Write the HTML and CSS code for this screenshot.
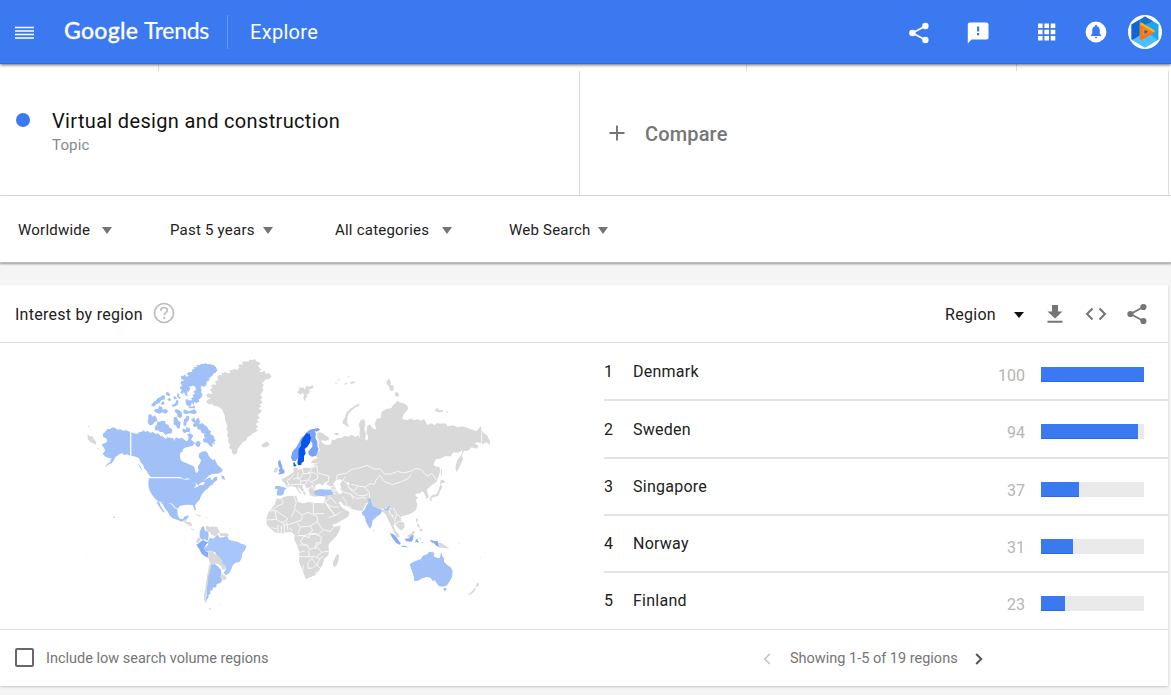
FILE: index.html
```html
<!DOCTYPE html>
<html lang="en">
<head>
<meta charset="utf-8">
<title>Google Trends</title>
<link rel="stylesheet" href="styles.css">
</head>
<body>
<header class="topbar">
  <svg class="menu" viewBox="0 0 19 14"><path d="M0 1.500h19M0 5h19M0 8.500h19M0 12h19"/></svg>
  <div class="logo"><span class="brand">Google</span><span class="product">Trends</span></div>
  <div class="page-name">Explore</div>
  <nav class="actions">
    <svg class="share" viewBox="0 0 20 22"><path d="M16.5 4 3.500 11l13 7" fill="none" stroke="currentColor" stroke-width="1.800"/><circle cx="16.400" cy="4" r="3.200"/><circle cx="3.400" cy="11" r="3.200"/><circle cx="16.400" cy="18" r="3.200"/></svg>
    <svg class="feedback" viewBox="0 0 22 22"><path fill-rule="evenodd" d="M2.500.5h17a2 2 0 0 1 2 2v13a2 2 0 0 1-2 2h-15L.8 21.500v-19a2 2 0 0 1 1.700-2zM10 4.500v5h2.200v-5zm0 6.500v2.300h2.200V11z"/></svg>
    <svg class="apps" viewBox="0 0 18 18"><path d="M0 .5h4.600v4.600H0zm6.400 0H11v4.600H6.400zm6.300 0h4.600v4.600h-4.600zM0 6.700h4.600v4.600H0zm6.400 0H11v4.600H6.400zm6.300 0h4.600v4.600h-4.600zM0 12.900h4.600v4.600H0zm6.400 0H11v4.600H6.400zm6.300 0h4.600v4.600h-4.600z"/></svg>
    <svg class="bell" viewBox="0 0 22 22"><circle cx="11" cy="11" r="10.400"/><path fill="#3b79f1" d="M5.800 15v-.8l1.400-1.400V9.200c0-2 1.200-3.500 2.900-3.900V4.700a.9.9 0 0 1 1.800 0v.6c1.700.4 2.900 1.900 2.900 3.900v3.600l1.400 1.400v.8zM9.700 15.800h2.600a1.300 1.300 0 0 1-2.600 0z"/></svg>
    <svg class="avatar" viewBox="0 0 34 34"><circle cx="17" cy="17" r="17" fill="#fff"/><path fill="#1aa5fb" d="m17 1.500 13.500 8v15L17 32.500l-13.500-8v-15z"/><path fill="#1264d3" d="m3.500 9.500 8-4.700v17.700l-8 2z"/><path fill="#1874c9" d="m17 1.500 8 4.800-8 3.700-6-4.800z"/><path fill="#50bfff" d="m4.500 25 7-4.500 12-.5 6 5L17 32.500z"/><path d="m13.300 9.500 12.200 7-12.200 7z" fill="#fa8a12" stroke="#f8751a" stroke-width="3" stroke-linejoin="round"/><path d="m13.500 9 12 7" stroke="#f9b21c" stroke-width="2.600" stroke-linecap="round"/><path fill="#185fbd" d="m16.500 14.700 3.600 2.100-3.600 2.300z"/></svg>
  </nav>
</header>
<div class="tick-strip"><i></i><i></i><i></i></div>
<section class="terms">
  <div class="term">
    <span class="dot"></span>
    <div><div class="term-name">Virtual design and construction</div><div class="term-type">Topic</div></div>
  </div>
  <div class="compare">
    <svg viewBox="0 0 16 16"><path d="M8 .5v15M.5 8h15" stroke="currentColor" stroke-width="1.900"/></svg>
    <span>Compare</span>
  </div>
</section>
<section class="filters">
  <div class="filter world">Worldwide<b></b></div>
  <div class="filter time">Past 5 years<b></b></div>
  <div class="filter category">All categories<b></b></div>
  <div class="filter kind">Web Search<b></b></div>
</section>
<main class="card">
  <div class="card-head">
    <h1>Interest by region</h1>
    <svg class="help" viewBox="0 0 22 22"><circle cx="11" cy="11" r="9.500"/><path d="M7.800 8.800C7.800 6.700 9.200 5.500 11 5.500s3.200 1.200 3.200 2.900c0 2.300-3.100 2.500-3.100 4.900M11.100 14.900v2"/></svg>
    <div class="resolution">Region</div>
    <b class="caret"></b>
    <svg class="download" viewBox="0 0 16 19"><path d="M5 0h6v6.500h4.500L8 13.500.5 6.500H5zM.5 15.700h15v2H.5z"/></svg>
    <svg class="embed" viewBox="0 0 22 14"><path d="M7.500 1.500 2 7l5.500 5.500M14.500 1.500 20 7l-5.500 5.500"/></svg>
    <svg class="share-small" viewBox="0 0 20 22"><path d="M16.500 4 3.500 11l13 7" fill="none" stroke="currentColor" stroke-width="1.800"/><circle cx="16.400" cy="4" r="3.100"/><circle cx="3.400" cy="11" r="3.100"/><circle cx="16.400" cy="18" r="3.100"/></svg>
  </div>
  <div class="card-body">
    <div class="map-panel">
      <svg class="map" viewBox="0 0 1260 810">
        <g class="searched">
          <path d="M68 253L76 245 81 238 90 237 98 232 106 234 112 239 121 238 130 242 138 241 150 245V317L141 313 133 315 126 310 118 313 112 317 106 321 102 331 95 340 84 344 75 352 80 343 90 337 94 325 86 323 78 322 68 312 75 302 72 293 67 288 66 282 75 280 82 274 79 265 70 262z"/>
          <path d="M154 247L162 250 170 253 177 247 184 246 190 241 196 245 203 243 210 248 220 246 226 252 234 250 241 257 250 260 257 267 261 262 272 263 280 265 282 273 288 262 297 266 305 263 312 268 318 274 324 271 326 261 321 253 331 250 340 257 333 269 345 278 338 287 327 290 315 293 309 298 308 304 301 308 300 320 302 330 310 336 321 340 332 345 343 350 344 358 348 369 354 366 356 361 353 350 360 340 363 331 356 321 357 311 366 305 376 303 383 309 386 317 391 324 400 331 404 327 410 340 413 346 421 352 428 359 425 366 413 371 400 371 388 376 377 387 368 394 380 387 391 382 394 390 386 397 375 405 370 405 376 396 365 397 354 406 345 397 334 397 326 385 312 387 300 381H213L205 373 201 364 192 354 189 344 181 335 177 325 167 320 154 317z"/>
          <path d="M206 385L300 385 316 389 328 388 335 397 346 396 348 408 340 414 352 411 358 406 372 405 376 399 384 397 388 391 396 390 404 381 411 380 412 390 402 397 397 405 389 408 385 415 376 421 368 430 362 440 359 449 349 459 345 467 349 480 344 479 338 465 320 464 300 467 293 476 286 473 280 464 272 459 255 459 235 454 226 447 216 434 208 420 205 405z"/>
          <path d="M243 456L258 458 272 461 279 467 284 475 292 478 293 495 299 506 309 507 313 500 326 496 324 505 316 510 305 515 295 511 278 505 268 496 264 486 256 477 250 466zM230 452L238 457 242 468 249 479 255 488 248 485 240 473 233 463z"/>
          <path d="M302 77L309 78 316 73 318 80 326 78 320 70 329 66 337 66 335 60 344 56 342 50 350 51 350 46 360 45 362 41 370 42 376 40 384 43 390 41 396 45 402 45 408 52 412 61 407 68 401 70 397 78 388 83 388 91 380 95 380 103 374 110 364 108 362 115 366 120 362 126 368 132 365 141 356 149 358 154 350 160 343 155 341 167 337 158 327 162 320 158 325 151 337 151 333 145 341 141 338 135 346 130 339 126 347 121 347 112 341 107 334 109 326 110 331 115 326 126 323 122 321 132 325 138 316 136 312 126 307 132 301 128 305 121 299 113 306 106 301 100 305 92 313 93 304 86z"/>
          <path d="M213 166l8-10 8-5 4-6 8-4 8-6 7 4-2 9-10 3-6 8-9 4-8 7zM225 178l10-2 2-8 9 2 3 10 7-4 9 7-7 8-12-4-7 4-11-3-6-5zM205 194l8-1 4 7 8-4 5 9 2 9-8 1-6 9-7 2-6-4-2-6 2-9zM224 232l7-9 0-9 8 2 5-4 11 1 2 9 9 2 1 8 10 6-2 12-12 1-6 4-9-9-8 0-7-6-7 2zM276 164l9-3 4-11 7 2-3 12-7 5-9 2zM287 177l10 3 8 7 2 12-7 6-7-5-2-9-7-6zM311 178l15 6 18-6 7 9-7 6-14-3-13 2-7-4zM312 208l6-5 2-6 8 2-2 12-7 8-1 10-8-4zM281 202l9-2 5 12 7 5-2 17-7 2-5-9-7-4zM260 125l7 3 4 9-7 1-7-5zM281 138l7 2 3 7-9 1zM317 149l5-3 3 10 10 3-2 9-11-1-5-7zM309 235l7 4 4-9 5 5 6 0-2 13-8-3-8 5-6-6zM293 129l5 3-1 7 6 4-5 4-7-8zM268 143l6 6-5 5-7-5zM247 154l7 3-4 8-8-2zM323 168l10 2 12-3-1 8-15 0z"/>
          <path d="M334 209L342 202 346 212 355 202 360 214 358 223 366 219 374 225 382 231 384 237 393 244 391 253 401 257 402 264 407 272 402 276 406 285 397 278 398 292 389 287 381 278 370 276 369 266 377 264 371 258 374 251 365 249 362 240 353 238 350 229 343 232 338 225 344 218 336 214zM347 276l9-4 6 7-2 9-7 4-7-7zM424 376l8 2 3 12-9-4zM173 340l8 8 7 14-7-7zM316 275l8 5-4 7-8-3z"/>
          <path d="M359 547L365 531 371 528 375 542 385 545 386 558 383 573 375 568 366 569 359 561z"/>
          <path class="mid" d="M356 580L364 573 370 570 376 574 385 577 378 584 373 593 376 604 385 606 385 623 374 619 365 611 359 599 349 584z"/>
          <path class="light" d="M385 572L389 563 400 566 409 557 414 554 418 563 430 562 442 558 447 569 457 572 472 575 484 581 495 584 499 589 495 600 487 610 485 624 479 635 464 640 457 648 454 658 447 670 438 676 430 669 437 660 436 648 427 645 425 631 414 623 405 606 389 604 376 604 373 594 384 585z"/>
          <path d="M392 642l13 0 8 7 10 10 1 12-2 10 4 9-4 8-12 5-1 9-11 1 0 8-8 1 2 9-6 3-1 10-6 6 1 5-3 4-2-10 4-7 1-17-2-10 3-16 1-17 5-16 4-11zM387 773l9 7-7-2z"/>
        </g>
        <g class="unsearched">
          <path d="M412 80L418 74 427 76 423 68 431 69 434 65 442 70 451 68 448 60 455 61 462 57 473 60 479 50 472 47 481 43 489 45 486 37 494 34 505 35 508 29 519 30 525 27 529 35 538 36 541 43 534 47 539 54 546 59 537 63 545 67 554 62 557 71 568 70 575 80 566 88 558 88 551 95 545 98 552 105 546 112 551 118 546 127 541 134 548 143 540 149 549 157 538 164 544 169 536 175 546 182 540 190 533 194 539 205 530 210 537 215 527 222 534 229 528 237 534 242 520 249 512 256 502 262 498 272 488 276 484 282 478 290 473 298 471 310 463 314 456 308 455 299 447 293 450 284 444 276 446 265 441 258 444 246 439 237 442 228 436 212 434 196 427 180 419 172 412 169 401 167 397 163 387 163 378 157 383 149 394 143 384 143 377 135 385 130 396 132 395 125 389 119 399 113 391 107 401 103 409 105 405 94 415 90z"/>
          <path d="M541 284l9-2 0-4 7 0 1-4 7 4 4 5-3 4-9 5-8 0-5-3 4-2zM23 253l10 7 5-2 3 10 8 7-2 9-9-4-7-4-8-9zM51 292l6 4 3 4-6-2zM24 228h4v3h-4z"/>
          <path d="M310 511l8-1 2 6 10-1 5 7 2 7-6-1-7-4-9-6zM330 532l8 5 6 4-6 0zM344 492l12 2 10 7-9-2zM374 501l11 3-7 1zM376 529l9-1 4 4 9-3 8 1 7 2 2 7 5 7-5 4-6 7-5 1-8-3-7-9-10-4zM421 549l8 1 14 0 4 8-11 2-7-3-8 2-3-6zM350 570l5-8 8 2-3 8-7 7-5-1zM386 604l6-4 7 4 4 7 10 5 10 9 3 12-6-1-8 7-5-3-7 5-10-3-5-19 1-8zM411 633l8-4 6 5 3 8 8 3 0 9-4 5-6-1-2-9-9-6zM424 671l12 6 4 6-5 8-11-3zM387 643l4 6-1 16-5 13-1 20-3 14 0 14-2 12-4 10-4-9 5-23 3-25 5-28zM373 742l5 4-1 7-5-4z"/>
        </g>
        <g transform="translate(540 0)">
          <g class="unsearched">
            <path d="M172 248L180 246 188 250 198 257 206 262 207 269 196 273 184 270 186 278 198 285 208 284 214 280 215 269 224 270 235 263 243 265 254 257 265 260 276 254 286 261 296 256 301 268 298 250 300 238 296 224 302 211 311 207 316 218 313 238 318 252 315 266 322 272 325 260 319 248 321 230 330 222 338 235 349 239 344 222 350 206 362 204 365 185 377 178 394 174 399 166 413 152 421 158 431 160 441 166 445 176 437 186 429 195 427 207 440 210 454 206 463 211 472 207 482 212 492 207 498 217 501 225 515 220 524 226 531 218 540 221 556 220 562 229 579 226 592 232 607 229 621 233 637 239 650 243 655 237 662 228 666 239 671 250 681 256 690 274 689 286 680 277 668 282 653 276 643 281 656 287 651 296 635 292 624 302 612 303 606 315 609 327 603 340 597 354 589 366 586 352 592 330 604 315 608 300 594 308 580 307 572 319 555 319 540 326 528 327 520 344 529 350 537 350 541 361 536 379 529 397 516 404 507 413 500 418 503 431 507 440 500 448 494 433 488 423 480 430 468 431 466 438 475 442 468 450 472 464 468 480 454 490 441 495 430 497 424 500 422 509 432 520 434 532 424 542 417 537 409 528 403 521 401 529 407 543 417 553 419 562 412 562 404 551 398 538 390 520 383 506 376 492 370 487 361 482 352 484 340 470 328 463 320 459 315 466 307 483 290 481 277 478 270 474 251 466 243 455 235 457 246 473 261 482 269 487 264 500 247 510 225 523 214 524 206 506 194 483 187 461 193 450 195 440 176 439 162 440 150 436 145 420 148 410 141 416 135 405 126 407 131 419 137 429 134 437 127 424 121 418 112 409 118 423 128 433 119 430 106 411 95 408 80 412 79 407 74 400 64 389 82 379 97 369 102 363 99 358 107 351 115 360 134 353 151 354 161 348 164 339 152 340 159 330 174 324 167 318 168 307 180 300 175 286 178 273 172 264z"/>
            <path d="M110 127l9-7-4-8 9 2 5-3 5 8 5-12 9 3 10-5 3 8-8 5-7 0 4 7-5 8-7 0 6 8-5 1-5 12-4-10 2-9-4-7-6 6zM248 223l1-12 6-9 4-13 8-10 11-7 11-8 10-4-2 7-13 7-11 9-8 9-3 12-1 13 6 13-7-1-8-7zM380 92l7-5 6 10-2 8 7 0 4 10-4 9-8-4-3-12-7-6zM404 128l8-2 6 10-6 5-7-5zM526 178l8-4 3 7 12-1 0 5-12 2-11-3zM558 183l8 2-4 3zM230 92l11-6-4 6zM224 98l8-1-4 5zM254 101l8-5-2 7-7 1zM270 96l10-2 6 5-14 3zM264 78l7 2-6 3zM221 252l9-4 8 2-7 7zM45 354l8-2 0 10-7 6-6-3zM543 356l3 4-1 23-3-10zM542 390l8 0 7 7-10 2-7 4zM541 402l6 10-8 14-4 12-14 3-8 5-3-5 10-7 10-2 5-10zM508 443l6 3 2 8-5-1zM469 504l5 4-2 10-5-6zM471 520l8 6 0 8-7-4zM480 536l8 1-2 8-7-3zM442 557l12-7 6-9 5 6-6 7-7 8-8 1zM399 553l7 3 8 13-8-5-7-5zM338 536l5 6-3 3zM536 577l9 3 14 9 9 8-10-2-12-2-9 1zM651 697l7 6-4 7-6 1zM645 713l-6 8-8 7-7 7 4 1 11-8 9-11zM223 629l4-10 6-8 4 6-2 16-5 13-5 5-6-3 0-12z"/>
            <path d="M50 445L59 447 70 441 87 437 112 437 115 451 129 457 144 451 157 457 185 458 194 478 203 500 213 519 222 531 242 527 239 541 230 557 215 573 205 585 207 604 205 615 193 626 189 641 179 659 165 676 145 684 137 687 132 673 126 656 117 635 118 607 111 585 103 569 104 555 94 545 79 547 68 550 51 549 40 543 30 534 20 523 20 506 24 489 34 477 44 464z"/>
          </g>
          <path class="water" d="M165 420l-1-8 4-8 12-3 7 6 4-6 11-4-2 6 8 4 8 9-20 3-15-1zM228 391l9-3 9 2-2 8-5 4 4 9-2 8 7 4-3 8-9 1-6-10-5-12-6-8zM259 398l6-3 4 8-5 4zM76 421l24-1 4-5 10 10 9 9 9 7 8-7 8 3 20 5 15-3 12 3-3 16-27 1-20-3-16 4-15-5-5-17-23-2-20-2zM197 455l7 10 14 20 10 12-8-4-17-23-8-12zM156 323l-4 9-4 9-5 7-7-1-2-14 3-8 10-9z"/>
          <g class="borders">
            <path d="M64 445l6 15-19 9-14 10M24 482h22l3 26-27 2M46 480l38 27-17 12-19-12M101 437l8 20-6 19 24 20-2 14-36 13-21 2M127 495l17-8 28 13M160 454v37h32M172 500v15l-21 13-30 3-8-12M151 528l7 13-10 10 0 12-24-7M173 516l15 22 23 7 9-13M189 540l-13 13-28-4M112 557h20l15-5M148 555l17-3 19 8-2 20-17 9 2 9M133 558l-12 17 12 10 11 0M116 585l24 0 8 13 20-5 0-14 16-1M116 619l31 2 0-20M170 590l15 17 22-4M185 607l-16 14-22-1M156 624l-12 13 0 18 13-1 13-9-15-20M169 621l11 6 10-10M179 626l-8 20 10 8M130 645l-2 20M113 608l21-5M165 668l8-2M121 532l-7 20M90 533l7 10M80 515l4 26M54 525v22M64 526v24M73 522v24M51 537l-16-4M105 478l-11 22M66 514l6 9"/>
            <path d="M232 375l25-5 20-12 24-5 20-7 24 12 15-2 14 16 18 0 21-8 17 5 24-6 14-8 16 4 17 20 15-9 13 20M232 375l-3 14M259 400l-10-11 8-10M358 374l15 20 24 10 27-9 20-9 10-13M360 376l-13 15-3 12-14-2-14 10-22-3-20-5M314 410l14 18 0 18M332 462l18 16 20 0 15-5 10 4M292 410l-8 13-19-11M264 408l13 16 18 13 17 0 12-4M245 425l28 8 7 15M247 440l12 17 0 12 15 3M273 434l16 11 10 0 14-4 4 8M202 412l7 12-2 16 10 7 12 15M209 424l18 9M187 449l12 4 11-9M194 458l24 13 17 0M205 503l23-8 17-11M384 471l8 24 9 2M400 474l11 19-6 14 0 17M413 493l14 15M394 497l9 9M406 523l11-9 12 1"/>
            <path d="M79 409l8-4-6-14 12-6 8-12M88 405l15-2 17 0 3-11-10-7 1-17M99 387l23-4 8-13-4-16M123 393l22-3 8-14-10-10M129 371l20-1 6-12M144 369l17-1 13 7-2 12-17 7M145 391l-11 13-14-1M150 355l17-6M152 348h17M155 342l18-1M170 347l4 22 33 9-2 16-12 6M134 405l3 14M137 418l14-4 11-11M146 392l15 8M128 424l8 1 2 13M155 405l8 15M175 305l-3-30M207 394l-13 5M665 236v48M204 409l19 2M214 418l15 2M215 425l18-3"/>
          </g>
          <g class="searched">
            <path class="strong" d="M93 323l4-18 11-12 8-13 8-17 10-7 6-9 10-8 8-2 8-1 8-2 6 5-10 6-6-3-10 6-12 8-10 10-6 13-7 12-1 18-4 16-8 9-9-2z"/>
            <path class="strong" d="M155 242l8-1 5 10-2 12 6 13 0 13 4 8-8 20-12 3-10-6-1-10 12-14 0-9-5-9 1-15-4-7z"/>
            <path class="top" d="M112 338l3-16 1-24 7-12 1-12 8-15 7-9 11 2 3 11-3 15-8 12-8 7 3 13-5 9 0 15-7 4-1 7-10 1z"/>
            <path class="mid" d="M57 330l5 2 1 7 3 7 2 10 6 6-1 8-8 2-11 2 5-7-3-6 4-6-5-7-1-11z"/>
            <path class="top" d="M100 339l4-3 1 7 4 2-1 4h-7z"/>
            <path d="M46 408l10 0 12 3 12 3-8 9-1 9-8 5-12-1-1-6 3-13-8 0zM163 425l8-5 13-2 13 1 14 1 6 5 3 8-11 3-11 0-7 3-12-2-11-1-5-5zM322 447L332 444 333 456 339 468 350 474 366 480 363 491 350 500 338 511 336 524 330 536 324 528 317 513 314 499 307 495 305 487 313 480 320 465 327 457zM372 475l7 2 5-7 7-3-4 10-3 5-11-2z"/>
            <path class="mid" d="M390 549l10 4 11 11 12 18-6 2-9-6-7-9-6-9zM424 587l10 0 8 3 8 1-8 1-18-2zM434 565l6 1 8-1 7-9 6-1-2 14-5 6-3 0-13-1zM467 569l8-4-3 6 5 4-5 3-3-3-3 5zM508 571l8 0 9 3 9-1 3 18-9-4-4-6-9-4zM479 561l3 6-3 0zM482 577l10 2-6 1z"/>
            <path d="M449 643l9-6 16-7 9-3 5-9 6-3 8-2 5-7 13 1 3 4-2 8 13 6 6-2 3-17 5 14 4 5 0 10 9 9 11 8 6 11-2 18-7 13-8 12-11 4-12-1-7-7-6-11-6 3-8-11-11-2-16 5-9 6-12 2-2-15-5-17zM552 713l8 2-1 6-6 2-3-6z"/>
          </g>
        </g>
        <g class="searched"><path d="M100 500h5v3h-5z"/></g>
        <g class="unsearched"><path d="M20 620h3v2h-3zM314 566h3v2h-3zM419 764h5v2h-5zM1135 579l6 3-6-1zM1160 618l4 4zM1200 621l4 3-3 1z"/></g>
      </svg>
    </div>
    <ol class="ranking">
      <li><span class="rank">1</span><span class="region">Denmark</span><span class="score">100</span><span class="bar"><span style="width:100%"></span></span></li>
      <li><span class="rank">2</span><span class="region">Sweden</span><span class="score">94</span><span class="bar"><span style="width:94%"></span></span></li>
      <li><span class="rank">3</span><span class="region">Singapore</span><span class="score">37</span><span class="bar"><span style="width:37%"></span></span></li>
      <li><span class="rank">4</span><span class="region">Norway</span><span class="score">31</span><span class="bar"><span style="width:31%"></span></span></li>
      <li><span class="rank">5</span><span class="region">Finland</span><span class="score">23</span><span class="bar"><span style="width:23%"></span></span></li>
    </ol>
  </div>
  <footer class="card-foot">
    <span class="checkbox"></span><span class="low-volume">Include low search volume regions</span>
    <svg class="prev" viewBox="0 0 8 12"><path d="M6.800 1 1.800 6l5 5"/></svg>
    <span class="showing">Showing 1-5 of 19 regions</span>
    <svg class="next" viewBox="0 0 8 12"><path d="m1.200 1 5 5-5 5"/></svg>
  </footer>
</main>
</body>
</html>
```
FILE: styles.css
```css
* { box-sizing: border-box; }
body { margin: 0; height: 695px; overflow: hidden; background: #f5f5f5; color: #212121; font-family: Roboto, sans-serif; white-space: nowrap; }
svg { display: block; flex: none; fill: currentColor; }

.topbar { position: relative; display: flex; align-items: center; height: 64px; padding: 1px 0 0 15px; background: #3b79f1; border-bottom: 1px solid #2a6ae8; color: #fff; box-shadow: 0 1px 3px rgba(0,0,0,.6); }
.menu { width: 19px; height: 14px; stroke: #fff; stroke-width: 1.7; margin-top: 1px; }
.logo { display: flex; width: 163px; margin: -5px 0 0 30px; font: 23px/30px Lato, sans-serif; gap: 4px; }
.brand { width: 76px; font-weight: 500; letter-spacing: .3px; -webkit-text-stroke: .3px #fff; }
.product { width: 68px; letter-spacing: -.3px; -webkit-text-stroke: .2px #fff; }
.page-name { height: 34px; padding-left: 22px; border-left: 1px solid #619af8; font-size: 20px; line-height: 34px; letter-spacing: .3px; }
.actions { display: flex; align-items: center; margin-left: auto; padding-right: 9px; }
.share { width: 20px; height: 22px; margin-right: 38px; margin-top: 1px; }
.feedback { width: 22px; height: 22px; margin-right: 49px; margin-top: 1px; }
.apps { width: 18px; height: 18px; margin-right: 29px; }
.bell { width: 22px; height: 22px; margin-right: 21px; }
.avatar { width: 34px; height: 34px; margin-top: -1px; }

.tick-strip { display: grid; grid-template-columns: 159px 588px 270px; height: 7px; background: #fff; }
.tick-strip i { border-right: 1px solid #ddd; }

.terms { display: grid; grid-template-columns: 580px 589px 2px; height: 125px; background: #fff; border-bottom: 1px solid #dcdcdc; }
.term { display: flex; padding: 37px 0 0 16px; border-right: 1px solid #dedede; }
.dot { width: 14px; height: 14px; margin: 5px 22px 0 0; border-radius: 50%; background: #3b79f1; }
.term-name { font-size: 20px; line-height: 27px; letter-spacing: .34px; color: #111; }
.term-type { font-size: 15px; line-height: 21px; color: #888; letter-spacing: .15px; }
.compare { display: flex; align-items: center; padding: 2px 0 0 29px; border-right: 1px solid #dedede; color: #757575; font-size: 20px; font-weight: 500; letter-spacing: .15px; }
.compare svg { width: 16px; height: 16px; margin: -2px 20px 0 0; }

.filters { display: grid; grid-template-columns: 152px 165px 174px 150px; height: 67px; padding: 2px 0 0 18px; background: #fff; font-size: 15px; letter-spacing: .22px; border-bottom: 1px solid #bdbdbd; box-shadow: 0 1px 2px rgba(0,0,0,.4); }
.filter { display: flex; align-items: center; }
.filter b { width: 0; height: 0; border: 5.5px solid transparent; border-top: 7px solid #757575; border-bottom: 0; }
.world b { margin-left: 12px; }
.time b { margin-left: 8px; }
.category b { margin-left: 13px; }
.kind b { margin-left: 8px; }

.card { width: 1168px; margin-top: 22px; background: #fff; box-shadow: 0 1px 2px rgba(0,0,0,.2); }
.card-head { display: flex; align-items: center; height: 58px; padding-left: 15px; border-bottom: 1px solid #dedede; }
.card-head h1 { width: 138px; margin: 1px 0 0; font-size: 16px; font-weight: 400; letter-spacing: .26px; }
.help { width: 22px; height: 22px; fill: none; stroke: #bdbdbd; stroke-width: 1.7; margin-top: -2px; }
.resolution { margin: 1px 0 0 auto; font-size: 16px; width: 69px; letter-spacing: .3px; }
.caret { border: 5.5px solid transparent; border-top: 6px solid #111; border-bottom: 0; margin: 2px 23px 0 0; }
.download { width: 16px; height: 19px; color: #757575; margin: 2px 22px 0 0; }
.embed { width: 22px; height: 14px; fill: none; stroke: #757575; stroke-width: 2; margin-right: 20px; }
.share-small { width: 20px; height: 22px; color: #757575; margin-right: 21px; }

.card-body { display: grid; grid-template-columns: 604px 564px; height: 286px; }
.map-panel { padding: 7px 0 0 80px; }
.map { width: 420px; height: 270px; }
.map path { stroke-linejoin: round; }
.unsearched { fill: #d9d9d9; }
.searched { fill: #a1c0f8; }
.light { fill: #a8c6fa; }
.mid { fill: #85adf7; }
.strong { fill: #76a3f5; }
.top { fill: #0755eb; }
.water { fill: #fff; }
.borders { fill: none; stroke: #f7f7f7; stroke-width: 3; }

.ranking { margin: 0; padding: 1px 0 0; list-style: none; display: grid; grid-template-rows: repeat(4, 57.3px) 55px; font-size: 16px; }
.ranking li { display: grid; grid-template-columns: 29px 320px 72px 16px 103px; border-bottom: 2px solid #e4e4e4; }
.ranking li:last-child { border-bottom-color: transparent; }
.rank, .region { padding-top: 18.3px; line-height: 19px; }
.region { letter-spacing: .25px; }
.score { padding-top: 22.2px; line-height: 19px; text-align: right; color: #b5b5b5; }
.bar { grid-column: 5; height: 15px; margin-top: 23px; background: #eaeaea; }
.bar span { display: block; height: 15px; background: #3b79f1; border-bottom: 1px solid #2869ef; }

.card-foot { display: flex; align-items: center; height: 57px; padding: 1px 0 0 15px; border-top: 1px solid #dedede; color: #757575; }
.checkbox { width: 19px; height: 19px; border: 2px solid #686868; border-radius: 2px; margin-right: 12px; margin-top: -2px; }
.low-volume { width: 717px; font-size: 14.5px; }
.card-foot svg { width: 8px; height: 12px; fill: none; stroke: #c4c4c4; stroke-width: 1.7; margin-top: 1px; }
.showing { width: 167px; margin: 0 18px 0 19px; font-size: 14.5px; }
.card-foot .next { stroke: #555; stroke-width: 2; }
```
